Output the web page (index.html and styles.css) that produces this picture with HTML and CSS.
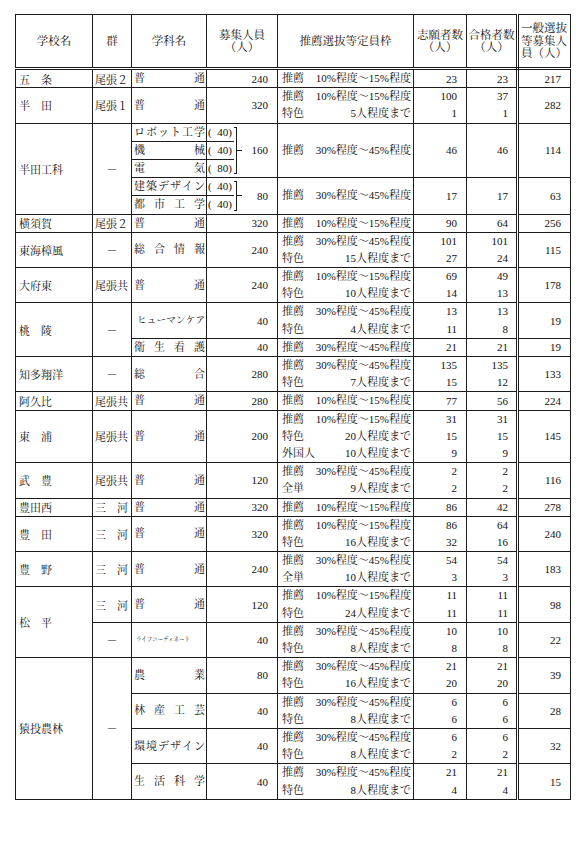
FILE: index.html
```html
<!DOCTYPE html>
<html lang="ja">
<head>
<meta charset="utf-8">
<title>推薦選抜等</title>
<link rel="stylesheet" href="styles.css">
</head>
<body>
<div class="page">
<table class="t">
<colgroup>
<col class="c1"><col class="c2"><col class="c3"><col class="c4a"><col class="c4b"><col class="c5"><col class="c6"><col class="c7"><col class="c8">
</colgroup>
<thead>
<tr>
<th><div class="hd">学校名</div></th>
<th><div class="hd">群</div></th>
<th><div class="hd">学科名</div></th>
<th colspan="2"><div class="hd">募集人員<br>（人）</div></th>
<th><div class="hd">推薦選抜等定員枠</div></th>
<th><div class="hd">志願者数<br>（人）</div></th>
<th class="dbl"><div class="hd">合格者数<br>（人）</div></th>
<th><div class="hd hl">一般選抜<br>等募集人<br>員（人）</div></th>
</tr>
</thead>
<tbody>
<!-- 五条 -->
<tr>
<td class="nm">五　条</td>
<td class="gr">尾張２</td>
<td><div class="ln dp"><span>普</span><span>通</span></div></td>
<td colspan="2" class="num n4">240</td>
<td><div class="ln sel"><span>推薦</span><span>10%程度～15%程度</span></div></td>
<td class="num n6">23</td>
<td class="num n7 dbl">23</td>
<td class="num n8">217</td>
</tr>
<!-- 半田 -->
<tr>
<td class="nm">半　田</td>
<td class="gr">尾張１</td>
<td><div class="ln dp"><span>普</span><span>通</span></div></td>
<td colspan="2" class="num n4">320</td>
<td><div class="ln sel"><span>推薦</span><span>10%程度～15%程度</span></div><div class="ln sel"><span>特色</span><span>5人程度まで</span></div></td>
<td class="num n6"><div class="ln">100</div><div class="ln">1</div></td>
<td class="num n7 dbl"><div class="ln">37</div><div class="ln">1</div></td>
<td class="num n8">282</td>
</tr>
<!-- 半田工科 -->
<tr>
<td class="nm" rowspan="5">半田工科</td>
<td class="gr ctr" rowspan="5">－</td>
<td><div class="ln dp"><span>ロ</span><span>ボ</span><span>ッ</span><span>ト</span><span>工</span><span>学</span></div></td>
<td class="par"><div class="ln">(&ensp;40)</div></td>
<td class="brc" rowspan="3"><div class="brw h3"><span class="brk"></span><span class="tick"></span><span class="bnum">160</span></div></td>
<td rowspan="3"><div class="ln sel"><span>推薦</span><span>30%程度～45%程度</span></div></td>
<td rowspan="3" class="num n6">46</td>
<td rowspan="3" class="num n7 dbl">46</td>
<td rowspan="3" class="num n8">114</td>
</tr>
<tr>
<td><div class="ln dp"><span>機</span><span>械</span></div></td>
<td class="par"><div class="ln">(&ensp;40)</div></td>
</tr>
<tr>
<td><div class="ln dp"><span>電</span><span>気</span></div></td>
<td class="par"><div class="ln">(&ensp;80)</div></td>
</tr>
<tr>
<td><div class="ln dp"><span>建</span><span>築</span><span>デ</span><span>ザ</span><span>イ</span><span>ン</span></div></td>
<td class="par"><div class="ln">(&ensp;40)</div></td>
<td class="brc" rowspan="2"><div class="brw h2"><span class="brk"></span><span class="tick"></span><span class="bnum">80</span></div></td>
<td rowspan="2"><div class="ln sel"><span>推薦</span><span>30%程度～45%程度</span></div></td>
<td rowspan="2" class="num n6">17</td>
<td rowspan="2" class="num n7 dbl">17</td>
<td rowspan="2" class="num n8">63</td>
</tr>
<tr>
<td><div class="ln dp"><span>都</span><span>市</span><span>工</span><span>学</span></div></td>
<td class="par"><div class="ln">(&ensp;40)</div></td>
</tr>
<!-- 横須賀 -->
<tr>
<td class="nm">横須賀</td>
<td class="gr">尾張２</td>
<td><div class="ln dp"><span>普</span><span>通</span></div></td>
<td colspan="2" class="num n4">320</td>
<td><div class="ln sel"><span>推薦</span><span>10%程度～15%程度</span></div></td>
<td class="num n6">90</td>
<td class="num n7 dbl">64</td>
<td class="num n8">256</td>
</tr>
<!-- 東海樟風 -->
<tr>
<td class="nm">東海樟風</td>
<td class="gr ctr">－</td>
<td><div class="ln dp"><span>総</span><span>合</span><span>情</span><span>報</span></div></td>
<td colspan="2" class="num n4">240</td>
<td><div class="ln sel"><span>推薦</span><span>30%程度～45%程度</span></div><div class="ln sel"><span>特色</span><span>15人程度まで</span></div></td>
<td class="num n6"><div class="ln">101</div><div class="ln">27</div></td>
<td class="num n7 dbl"><div class="ln">101</div><div class="ln">24</div></td>
<td class="num n8">115</td>
</tr>
<!-- 大府東 -->
<tr>
<td class="nm">大府東</td>
<td class="gr">尾張共</td>
<td><div class="ln dp"><span>普</span><span>通</span></div></td>
<td colspan="2" class="num n4">240</td>
<td><div class="ln sel"><span>推薦</span><span>10%程度～15%程度</span></div><div class="ln sel"><span>特色</span><span>10人程度まで</span></div></td>
<td class="num n6"><div class="ln">69</div><div class="ln">14</div></td>
<td class="num n7 dbl"><div class="ln">49</div><div class="ln">13</div></td>
<td class="num n8">178</td>
</tr>
<!-- 桃陵 -->
<tr>
<td class="nm" rowspan="2">桃　陵</td>
<td class="gr ctr" rowspan="2">－</td>
<td><div class="ln dp hc"><span>ヒ</span><span>ュ</span><span>ー</span><span>マ</span><span>ン</span><span>ケ</span><span>ア</span></div></td>
<td colspan="2" class="num n4">40</td>
<td><div class="ln sel"><span>推薦</span><span>30%程度～45%程度</span></div><div class="ln sel"><span>特色</span><span>4人程度まで</span></div></td>
<td class="num n6"><div class="ln">13</div><div class="ln">11</div></td>
<td class="num n7 dbl"><div class="ln">13</div><div class="ln">8</div></td>
<td class="num n8">19</td>
</tr>
<tr>
<td><div class="ln dp"><span>衛</span><span>生</span><span>看</span><span>護</span></div></td>
<td colspan="2" class="num n4">40</td>
<td><div class="ln sel"><span>推薦</span><span>30%程度～45%程度</span></div></td>
<td class="num n6">21</td>
<td class="num n7 dbl">21</td>
<td class="num n8">19</td>
</tr>
<!-- 知多翔洋 -->
<tr>
<td class="nm">知多翔洋</td>
<td class="gr ctr">－</td>
<td><div class="ln dp"><span>総</span><span>合</span></div></td>
<td colspan="2" class="num n4">280</td>
<td><div class="ln sel"><span>推薦</span><span>30%程度～45%程度</span></div><div class="ln sel"><span>特色</span><span>7人程度まで</span></div></td>
<td class="num n6"><div class="ln">135</div><div class="ln">15</div></td>
<td class="num n7 dbl"><div class="ln">135</div><div class="ln">12</div></td>
<td class="num n8">133</td>
</tr>
<!-- 阿久比 -->
<tr>
<td class="nm">阿久比</td>
<td class="gr">尾張共</td>
<td><div class="ln dp"><span>普</span><span>通</span></div></td>
<td colspan="2" class="num n4">280</td>
<td><div class="ln sel"><span>推薦</span><span>10%程度～15%程度</span></div></td>
<td class="num n6">77</td>
<td class="num n7 dbl">56</td>
<td class="num n8">224</td>
</tr>
<!-- 東浦 -->
<tr>
<td class="nm">東　浦</td>
<td class="gr">尾張共</td>
<td><div class="ln dp"><span>普</span><span>通</span></div></td>
<td colspan="2" class="num n4">200</td>
<td><div class="ln sel"><span>推薦</span><span>10%程度～15%程度</span></div><div class="ln sel"><span>特色</span><span>20人程度まで</span></div><div class="ln sel"><span>外国人</span><span>10人程度まで</span></div></td>
<td class="num n6"><div class="ln">31</div><div class="ln">15</div><div class="ln">9</div></td>
<td class="num n7 dbl"><div class="ln">31</div><div class="ln">15</div><div class="ln">9</div></td>
<td class="num n8">145</td>
</tr>
<!-- 武豊 -->
<tr>
<td class="nm">武　豊</td>
<td class="gr">尾張共</td>
<td><div class="ln dp"><span>普</span><span>通</span></div></td>
<td colspan="2" class="num n4">120</td>
<td><div class="ln sel"><span>推薦</span><span>30%程度～45%程度</span></div><div class="ln sel"><span>全単</span><span>9人程度まで</span></div></td>
<td class="num n6"><div class="ln">2</div><div class="ln">2</div></td>
<td class="num n7 dbl"><div class="ln">2</div><div class="ln">2</div></td>
<td class="num n8">116</td>
</tr>
<!-- 豊田西 -->
<tr>
<td class="nm">豊田西</td>
<td class="gr">三　河</td>
<td><div class="ln dp"><span>普</span><span>通</span></div></td>
<td colspan="2" class="num n4">320</td>
<td><div class="ln sel"><span>推薦</span><span>10%程度～15%程度</span></div></td>
<td class="num n6">86</td>
<td class="num n7 dbl">42</td>
<td class="num n8">278</td>
</tr>
<!-- 豊田 -->
<tr>
<td class="nm">豊　田</td>
<td class="gr">三　河</td>
<td><div class="ln dp"><span>普</span><span>通</span></div></td>
<td colspan="2" class="num n4">320</td>
<td><div class="ln sel"><span>推薦</span><span>10%程度～15%程度</span></div><div class="ln sel"><span>特色</span><span>16人程度まで</span></div></td>
<td class="num n6"><div class="ln">86</div><div class="ln">32</div></td>
<td class="num n7 dbl"><div class="ln">64</div><div class="ln">16</div></td>
<td class="num n8">240</td>
</tr>
<!-- 豊野 -->
<tr>
<td class="nm">豊　野</td>
<td class="gr">三　河</td>
<td><div class="ln dp"><span>普</span><span>通</span></div></td>
<td colspan="2" class="num n4">240</td>
<td><div class="ln sel"><span>推薦</span><span>30%程度～45%程度</span></div><div class="ln sel"><span>全単</span><span>10人程度まで</span></div></td>
<td class="num n6"><div class="ln">54</div><div class="ln">3</div></td>
<td class="num n7 dbl"><div class="ln">54</div><div class="ln">3</div></td>
<td class="num n8">183</td>
</tr>
<!-- 松平 -->
<tr>
<td class="nm" rowspan="2">松　平</td>
<td class="gr">三　河</td>
<td><div class="ln dp"><span>普</span><span>通</span></div></td>
<td colspan="2" class="num n4">120</td>
<td><div class="ln sel"><span>推薦</span><span>10%程度～15%程度</span></div><div class="ln sel"><span>特色</span><span>24人程度まで</span></div></td>
<td class="num n6"><div class="ln">11</div><div class="ln">11</div></td>
<td class="num n7 dbl"><div class="ln">11</div><div class="ln">11</div></td>
<td class="num n8">98</td>
</tr>
<tr>
<td class="gr ctr">－</td>
<td><div class="ln lf">ライフコーディネート</div></td>
<td colspan="2" class="num n4">40</td>
<td><div class="ln sel"><span>推薦</span><span>30%程度～45%程度</span></div><div class="ln sel"><span>特色</span><span>8人程度まで</span></div></td>
<td class="num n6"><div class="ln">10</div><div class="ln">8</div></td>
<td class="num n7 dbl"><div class="ln">10</div><div class="ln">8</div></td>
<td class="num n8">22</td>
</tr>
<!-- 猿投農林 -->
<tr>
<td class="nm" rowspan="4">猿投農林</td>
<td class="gr ctr" rowspan="4">－</td>
<td><div class="ln dp"><span>農</span><span>業</span></div></td>
<td colspan="2" class="num n4">80</td>
<td><div class="ln sel"><span>推薦</span><span>30%程度～45%程度</span></div><div class="ln sel"><span>特色</span><span>16人程度まで</span></div></td>
<td class="num n6"><div class="ln">21</div><div class="ln">20</div></td>
<td class="num n7 dbl"><div class="ln">21</div><div class="ln">20</div></td>
<td class="num n8">39</td>
</tr>
<tr>
<td><div class="ln dp"><span>林</span><span>産</span><span>工</span><span>芸</span></div></td>
<td colspan="2" class="num n4">40</td>
<td><div class="ln sel"><span>推薦</span><span>30%程度～45%程度</span></div><div class="ln sel"><span>特色</span><span>8人程度まで</span></div></td>
<td class="num n6"><div class="ln">6</div><div class="ln">6</div></td>
<td class="num n7 dbl"><div class="ln">6</div><div class="ln">6</div></td>
<td class="num n8">28</td>
</tr>
<tr>
<td><div class="ln dp"><span>環</span><span>境</span><span>デ</span><span>ザ</span><span>イ</span><span>ン</span></div></td>
<td colspan="2" class="num n4">40</td>
<td><div class="ln sel"><span>推薦</span><span>30%程度～45%程度</span></div><div class="ln sel"><span>特色</span><span>8人程度まで</span></div></td>
<td class="num n6"><div class="ln">6</div><div class="ln">2</div></td>
<td class="num n7 dbl"><div class="ln">6</div><div class="ln">2</div></td>
<td class="num n8">32</td>
</tr>
<tr>
<td><div class="ln dp"><span>生</span><span>活</span><span>科</span><span>学</span></div></td>
<td colspan="2" class="num n4">40</td>
<td><div class="ln sel"><span>推薦</span><span>30%程度～45%程度</span></div><div class="ln sel"><span>特色</span><span>8人程度まで</span></div></td>
<td class="num n6"><div class="ln">21</div><div class="ln">4</div></td>
<td class="num n7 dbl"><div class="ln">21</div><div class="ln">4</div></td>
<td class="num n8">15</td>
</tr>
</tbody>
</table>
</div>
</body>
</html>
```
FILE: styles.css
```css
* { box-sizing: border-box; }
html, body { margin: 0; background: #fff; }
body {
  font-family: "Liberation Serif", "Noto Serif CJK JP", "Noto Sans CJK JP", serif;
  font-size: 11px;
  color: #111;
}
.page { padding: 14px 0 0 15px; }

.t { border-collapse: collapse; table-layout: fixed; width: 555px; }
.c1 { width: 77px; }
.c2 { width: 39px; }
.c3 { width: 75px; }
.c4a { width: 27px; }
.c4b { width: 44px; }
.c5 { width: 136px; }
.c6 { width: 53px; }
.c7 { width: 51px; }
.c8 { width: 53px; }

th, td {
  padding: 0;
  font-weight: normal;
  vertical-align: middle;
  white-space: nowrap;
}
.t th, .t td { border: 1px solid #1c1c1c; }
.t thead th { border-bottom: 3px double #1c1c1c; }
.t .dbl { border-right: 3px double #1c1c1c; }

.hd {
  height: 52px;
  display: flex;
  align-items: center;
  justify-content: center;
  text-align: center;
  font-size: 11.5px;
  line-height: 12.5px;
}
.hl { justify-content: flex-start; text-align: left; padding-left: 2px; }

.ln { height: 17.2px; line-height: 17.2px; }

.nm { padding-left: 3px; text-align: left; }
.gr { padding-left: 2px; text-align: left; }
.gr.ctr { text-align: center; padding-left: 0; }

.dp { display: flex; justify-content: space-between; padding: 0 1px 0 2px; }
.hc { font-size: 9.5px; padding-left: 5px; }
.lf { font-size: 5.5px; padding-left: 4px; }

.sel { display: flex; justify-content: space-between; padding: 0 2px 0 4px; }

.num { text-align: right; }
.n4 { padding-right: 9px; }
.n6 { padding-right: 9px; }
.n7 { padding-right: 8px; }
.n8 { padding-right: 9px; }

.t .par { border-right: none; padding-left: 1px; }
.t .brc { border-left: none; }
.brw { display: flex; align-items: center; }
.h3 { height: 53.6px; }
.h2 { height: 35.4px; }
.brk {
  align-self: stretch;
  width: 3px;
  margin: 3px 0;
  border: 1px solid #1c1c1c;
  border-left: 0;
}
.tick { width: 5px; border-top: 1px solid #1c1c1c; }
.bnum { flex: 1; text-align: right; padding-right: 9px; }
```
